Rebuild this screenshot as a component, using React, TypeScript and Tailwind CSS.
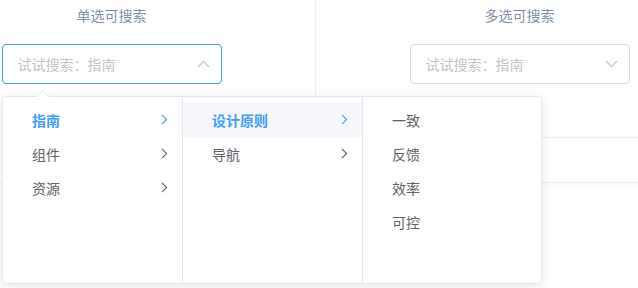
import React from 'react'

const font = { fontFamily: '"Noto Sans CJK SC", "Noto Sans", sans-serif' }

function ChevronRight({ className }: { className: string }) {
  return (
    <svg className={className} width="7" height="11" viewBox="0 0 7 11" fill="none">
      <path d="M1 0.8 L5.6 5.5 L1 10.2" stroke="currentColor" strokeWidth="1.1" />
    </svg>
  )
}

function ChevronY({ up }: { up: boolean }) {
  return (
    <svg width="13" height="8" viewBox="0 0 13 8" fill="none" className="text-[#c0c4cc]">
      <path d={up ? 'M1 7 L6.5 1.5 L12 7' : 'M1 1 L6.5 6.5 L12 1'} stroke="currentColor" strokeWidth="1.2" />
    </svg>
  )
}

function Select({ active }: { active: boolean }) {
  return (
    <div
      className={
        'flex items-center justify-between w-[220px] h-[40px] rounded-[4px] border bg-white pl-[15px] pr-[11px] ' +
        (active ? 'border-[#409eff]' : 'border-[#dcdfe6]')
      }
    >
      <span className="text-sm text-[#c0c4cc]">试试搜索：指南</span>
      <ChevronY up={active} />
    </div>
  )
}

type Item = { label: string; active?: boolean; hover?: boolean; arrow?: boolean }

function Menu({ items, width, last }: { items: Item[]; width: string; last?: boolean }) {
  return (
    <ul className={width + ' h-full pt-[6px] ' + (last ? '' : 'border-r border-[#e4e7ed]')}>
      {items.map((it) => (
        <li
          key={it.label}
          className={
            'flex items-center justify-between h-[34px] pl-[29px] pr-[14px] pb-[1px] text-sm ' +
            (it.hover ? 'bg-[#f5f7fa] ' : '') +
            (it.active ? 'text-[#409eff] font-bold' : 'text-[#606266]')
          }
        >
          <span>{it.label}</span>
          {it.arrow && <ChevronRight className={it.active ? 'text-[#409eff]' : 'text-[#606266]'} />}
        </li>
      ))}
    </ul>
  )
}

export default function App() {
  return (
    <div className="relative w-[638px] h-[288px] overflow-hidden bg-white" style={font}>
      {/* demo block, scrolled so the left column is partly off screen */}
      <div className="flex -ml-[92px] h-[138px] border-b border-[#eaeefb]">
        <div className="w-[408px] shrink-0 flex flex-col items-center pt-[5px] border-r border-[#eff2f6]">
          <span className="text-sm leading-[20px] text-[#8492a6]">单选可搜索</span>
          <div className="mt-[19px]">
            <Select active />
          </div>
        </div>
        <div className="w-[408px] shrink-0 flex flex-col items-center pt-[5px] border-r border-[#eff2f6]">
          <span className="text-sm leading-[20px] text-[#8492a6]">多选可搜索</span>
          <div className="mt-[19px]">
            <Select active={false} />
          </div>
        </div>
      </div>
      <div className="h-[45px] border-b border-[#eaeefb] shadow-[0_3px_6px_rgba(0,0,0,0.04)]" />

      {/* cascader popper */}
      <div className="absolute left-[2px] top-[96px] h-[188px] flex bg-white border border-[#e4e7ed] rounded-[4px] shadow-[0_2px_12px_0_rgba(0,0,0,0.1)]">
        <div className="absolute -top-[7px] left-[33px] w-0 h-0 border-x-[7px] border-x-transparent border-b-[7px] border-b-[#e4e7ed]" />
        <div className="absolute -top-[6px] left-[34px] w-0 h-0 border-x-[6px] border-x-transparent border-b-[6px] border-b-white" />
        <Menu
          width="w-[180px]"
          items={[
            { label: '指南', active: true, arrow: true },
            { label: '组件', arrow: true },
            { label: '资源', arrow: true },
          ]}
        />
        <Menu
          width="w-[180px]"
          items={[
            { label: '设计原则', active: true, hover: true, arrow: true },
            { label: '导航', arrow: true },
          ]}
        />
        <Menu
          width="w-[178px]"
          last
          items={[{ label: '一致' }, { label: '反馈' }, { label: '效率' }, { label: '可控' }]}
        />
      </div>
    </div>
  )
}
